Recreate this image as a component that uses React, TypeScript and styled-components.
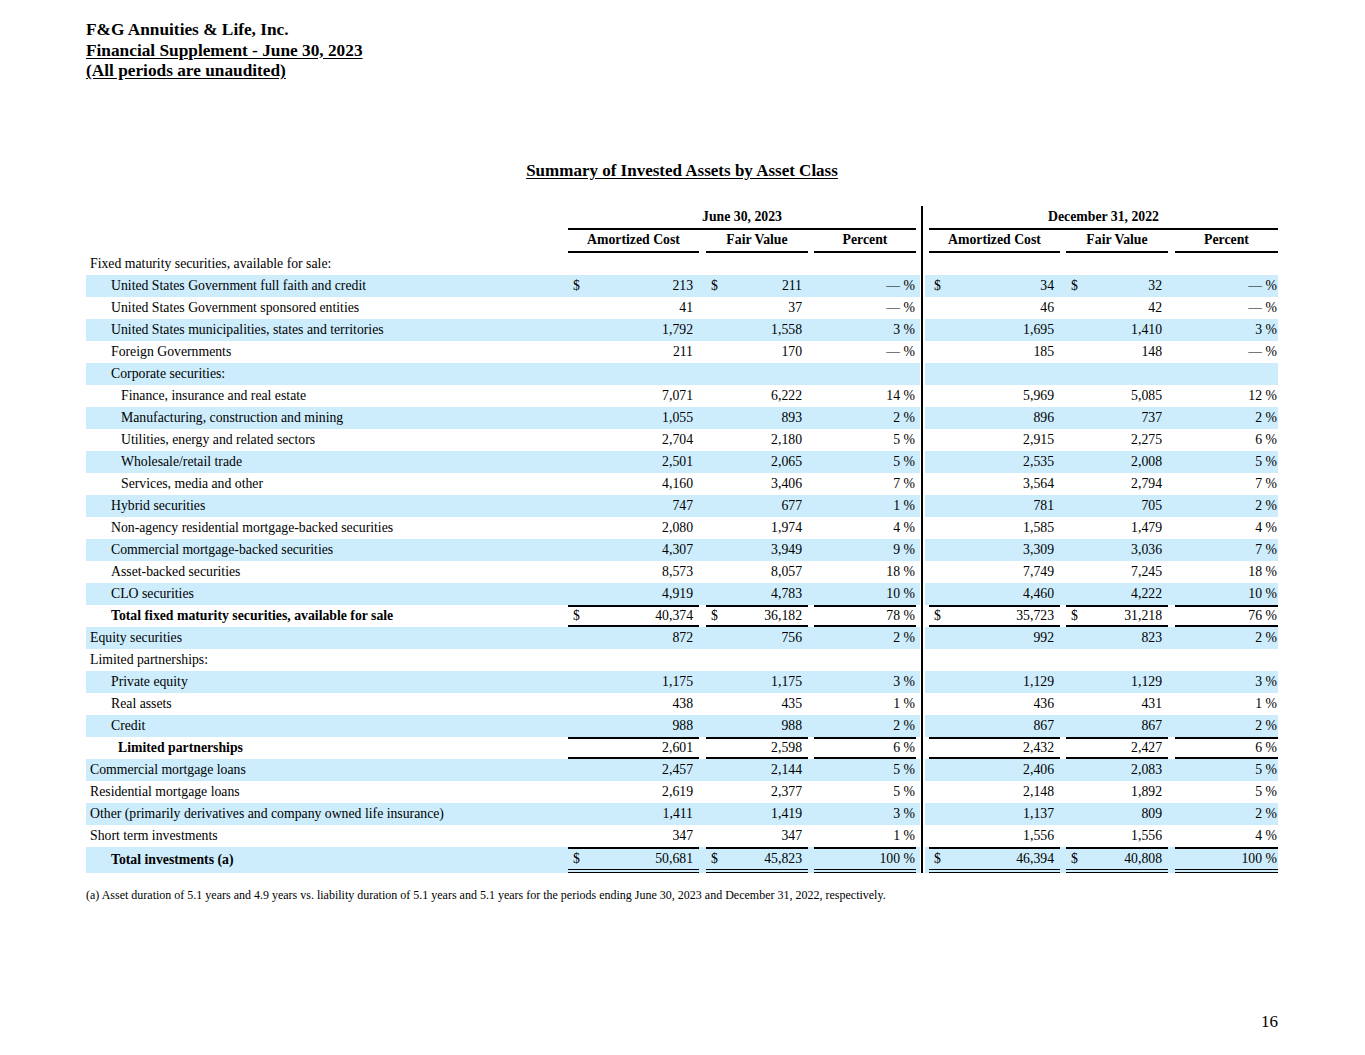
import styled, { createGlobalStyle, css } from "styled-components";

type Rule = "none" | "total" | "grand";

type RowData = {
  label: string;
  indent: number;
  bold?: boolean;
  dollar?: boolean;
  rule?: Rule;
  values?: [string, string, string, string, string, string];
};

const SHADE = "#cdedfd";
const COLUMNS =
  "482px 131px 7px 102px 6px 102px 13px 131px 6px 102px 7px 103px";

const rows: RowData[] = [
  { label: "Fixed maturity securities, available for sale:", indent: 4 },
  {
    label: "United States Government full faith and credit",
    indent: 25,
    dollar: true,
    values: ["213", "211", "— %", "34", "32", "— %"],
  },
  {
    label: "United States Government sponsored entities",
    indent: 25,
    values: ["41", "37", "— %", "46", "42", "— %"],
  },
  {
    label: "United States municipalities, states and territories",
    indent: 25,
    values: ["1,792", "1,558", "3 %", "1,695", "1,410", "3 %"],
  },
  {
    label: "Foreign Governments",
    indent: 25,
    values: ["211", "170", "— %", "185", "148", "— %"],
  },
  { label: "Corporate securities:", indent: 25 },
  {
    label: "Finance, insurance and real estate",
    indent: 35,
    values: ["7,071", "6,222", "14 %", "5,969", "5,085", "12 %"],
  },
  {
    label: "Manufacturing, construction and mining",
    indent: 35,
    values: ["1,055", "893", "2 %", "896", "737", "2 %"],
  },
  {
    label: "Utilities, energy and related sectors",
    indent: 35,
    values: ["2,704", "2,180", "5 %", "2,915", "2,275", "6 %"],
  },
  {
    label: "Wholesale/retail trade",
    indent: 35,
    values: ["2,501", "2,065", "5 %", "2,535", "2,008", "5 %"],
  },
  {
    label: "Services, media and other",
    indent: 35,
    values: ["4,160", "3,406", "7 %", "3,564", "2,794", "7 %"],
  },
  {
    label: "Hybrid securities",
    indent: 25,
    values: ["747", "677", "1 %", "781", "705", "2 %"],
  },
  {
    label: "Non-agency residential mortgage-backed securities",
    indent: 25,
    values: ["2,080", "1,974", "4 %", "1,585", "1,479", "4 %"],
  },
  {
    label: "Commercial mortgage-backed securities",
    indent: 25,
    values: ["4,307", "3,949", "9 %", "3,309", "3,036", "7 %"],
  },
  {
    label: "Asset-backed securities",
    indent: 25,
    values: ["8,573", "8,057", "18 %", "7,749", "7,245", "18 %"],
  },
  {
    label: "CLO securities",
    indent: 25,
    values: ["4,919", "4,783", "10 %", "4,460", "4,222", "10 %"],
  },
  {
    label: "Total fixed maturity securities, available for sale",
    indent: 25,
    bold: true,
    dollar: true,
    rule: "total",
    values: ["40,374", "36,182", "78 %", "35,723", "31,218", "76 %"],
  },
  {
    label: "Equity securities",
    indent: 4,
    values: ["872", "756", "2 %", "992", "823", "2 %"],
  },
  { label: "Limited partnerships:", indent: 4 },
  {
    label: "Private equity",
    indent: 25,
    values: ["1,175", "1,175", "3 %", "1,129", "1,129", "3 %"],
  },
  {
    label: "Real assets",
    indent: 25,
    values: ["438", "435", "1 %", "436", "431", "1 %"],
  },
  {
    label: "Credit",
    indent: 25,
    values: ["988", "988", "2 %", "867", "867", "2 %"],
  },
  {
    label: "Limited partnerships",
    indent: 32,
    bold: true,
    rule: "total",
    values: ["2,601", "2,598", "6 %", "2,432", "2,427", "6 %"],
  },
  {
    label: "Commercial mortgage loans",
    indent: 4,
    values: ["2,457", "2,144", "5 %", "2,406", "2,083", "5 %"],
  },
  {
    label: "Residential mortgage loans",
    indent: 4,
    values: ["2,619", "2,377", "5 %", "2,148", "1,892", "5 %"],
  },
  {
    label: "Other (primarily derivatives and company owned life insurance)",
    indent: 4,
    values: ["1,411", "1,419", "3 %", "1,137", "809", "2 %"],
  },
  {
    label: "Short term investments",
    indent: 4,
    values: ["347", "347", "1 %", "1,556", "1,556", "4 %"],
  },
  {
    label: "Total investments (a)",
    indent: 25,
    bold: true,
    dollar: true,
    rule: "grand",
    values: ["50,681", "45,823", "100 %", "46,394", "40,808", "100 %"],
  },
];

const GlobalStyle = createGlobalStyle`
  html, body {
    margin: 0;
    padding: 0;
    background: #fff;
  }
  body {
    font-family: "Liberation Serif", "Times New Roman", serif;
    color: #000;
  }
`;

const Page = styled.div`
  width: 1365px;
  min-height: 1055px;
  box-sizing: border-box;
  padding: 20px 0 23px 86px;
  display: flex;
  flex-direction: column;
`;

const Header = styled.div`
  font-size: 17.3px;
  font-weight: 700;
  line-height: 20.5px;
`;

const HeaderLine = styled.div<{ $underline?: boolean }>`
  text-decoration: ${({ $underline }) => ($underline ? "underline" : "none")};
  text-underline-offset: 2px;
`;

const Title = styled.div`
  width: 1192px;
  margin-top: 79px;
  text-align: center;
  font-size: 17px;
  font-weight: 700;
  line-height: 20px;
  text-decoration: underline;
  text-underline-offset: 2px;
`;

const Table = styled.div`
  width: 1192px;
  margin-top: 25px;
  font-size: 13.75px;
`;

const ruleStyles = {
  none: css``,
  total: css`
    border-top: 2px solid #000;
    border-bottom: 2px solid #000;
  `,
  grand: css`
    border-top: 2px solid #000;
    border-bottom: 4px double #000;
  `,
};

const TableRow = styled.div<{ $shaded?: boolean; $height: number }>`
  display: grid;
  grid-template-columns: ${COLUMNS};
  height: ${({ $height }) => $height}px;
  background: ${({ $shaded }) => ($shaded ? SHADE : "transparent")};
`;

const Cell = styled.div`
  box-sizing: border-box;
  display: flex;
  align-items: center;
  white-space: nowrap;
  min-width: 0;
`;

const LabelCell = styled(Cell)<{ $indent: number; $bold?: boolean }>`
  padding-left: ${({ $indent }) => $indent}px;
  font-weight: ${({ $bold }) => ($bold ? 700 : 400)};
`;

const MoneyCell = styled(Cell)<{ $rule: Rule }>`
  justify-content: space-between;
  padding: 0 6px 0 5px;
  ${({ $rule }) => ruleStyles[$rule]}
`;

const PctCell = styled(Cell)<{ $rule: Rule }>`
  justify-content: flex-end;
  padding-right: 1px;
  ${({ $rule }) => ruleStyles[$rule]}
`;

const Spacer = styled.div``;

const Divider = styled.div`
  background: linear-gradient(
    to right,
    transparent 0 4px,
    #fff 4px 5px,
    #000 5px 7px,
    #fff 7px 9px,
    transparent 9px
  );
`;

const GroupHead = styled(Cell)<{ $span: string }>`
  grid-column: ${({ $span }) => $span};
  justify-content: center;
  font-weight: 700;
  border-bottom: 2px solid #000;
`;

const ColHead = styled(Cell)`
  justify-content: center;
  font-weight: 700;
  border-bottom: 2px solid #000;
`;

const Footnote = styled.div`
  margin-top: 15px;
  font-size: 12px;
  line-height: 14px;
`;

const PageNumber = styled.div`
  margin-top: auto;
  width: 1192px;
  text-align: right;
  font-size: 17px;
  line-height: 20px;
`;

const MoneyGroup = ({
  amort,
  fair,
  pct,
  dollar,
  rule,
}: {
  amort: string;
  fair: string;
  pct: string;
  dollar?: boolean;
  rule: Rule;
}) => (
  <>
    <MoneyCell $rule={rule}>
      <span>{dollar ? "$" : ""}</span>
      <span>{amort}</span>
    </MoneyCell>
    <Spacer />
    <MoneyCell $rule={rule}>
      <span>{dollar ? "$" : ""}</span>
      <span>{fair}</span>
    </MoneyCell>
    <Spacer />
    <PctCell $rule={rule}>{pct}</PctCell>
  </>
);

const DataRow = ({ row, shaded }: { row: RowData; shaded: boolean }) => {
  const rule = row.rule ?? "none";
  const v = row.values;
  return (
    <TableRow $shaded={shaded} $height={rule === "grand" ? 26 : 22}>
      <LabelCell $indent={row.indent} $bold={row.bold}>
        {row.label}
      </LabelCell>
      {v ? (
        <MoneyGroup
          amort={v[0]}
          fair={v[1]}
          pct={v[2]}
          dollar={row.dollar}
          rule={rule}
        />
      ) : (
        <>
          <Spacer />
          <Spacer />
          <Spacer />
          <Spacer />
          <Spacer />
        </>
      )}
      <Divider />
      {v ? (
        <MoneyGroup
          amort={v[3]}
          fair={v[4]}
          pct={v[5]}
          dollar={row.dollar}
          rule={rule}
        />
      ) : null}
    </TableRow>
  );
};

export default function App() {
  return (
    <>
      <GlobalStyle />
      <Page>
        <Header>
          <HeaderLine>F&amp;G Annuities &amp; Life, Inc.</HeaderLine>
          <HeaderLine $underline>Financial Supplement - June 30, 2023</HeaderLine>
          <HeaderLine $underline>(All periods are unaudited)</HeaderLine>
        </Header>

        <Title>Summary of Invested Assets by Asset Class</Title>

        <Table>
          <TableRow $height={24}>
            <Spacer />
            <GroupHead $span="2 / 7">June 30, 2023</GroupHead>
            <Divider />
            <GroupHead $span="8 / 13">December 31, 2022</GroupHead>
          </TableRow>
          <TableRow $height={23}>
            <Spacer />
            <ColHead>Amortized Cost</ColHead>
            <Spacer />
            <ColHead>Fair Value</ColHead>
            <Spacer />
            <ColHead>Percent</ColHead>
            <Divider />
            <ColHead>Amortized Cost</ColHead>
            <Spacer />
            <ColHead>Fair Value</ColHead>
            <Spacer />
            <ColHead>Percent</ColHead>
          </TableRow>
          {rows.map((row, i) => (
            <DataRow key={row.label + i} row={row} shaded={i % 2 === 1} />
          ))}
        </Table>

        <Footnote>
          (a) Asset duration of 5.1 years and 4.9 years vs. liability duration
          of 5.1 years and 5.1 years for the periods ending June 30, 2023 and
          December 31, 2022, respectively.
        </Footnote>

        <PageNumber>16</PageNumber>
      </Page>
    </>
  );
}
